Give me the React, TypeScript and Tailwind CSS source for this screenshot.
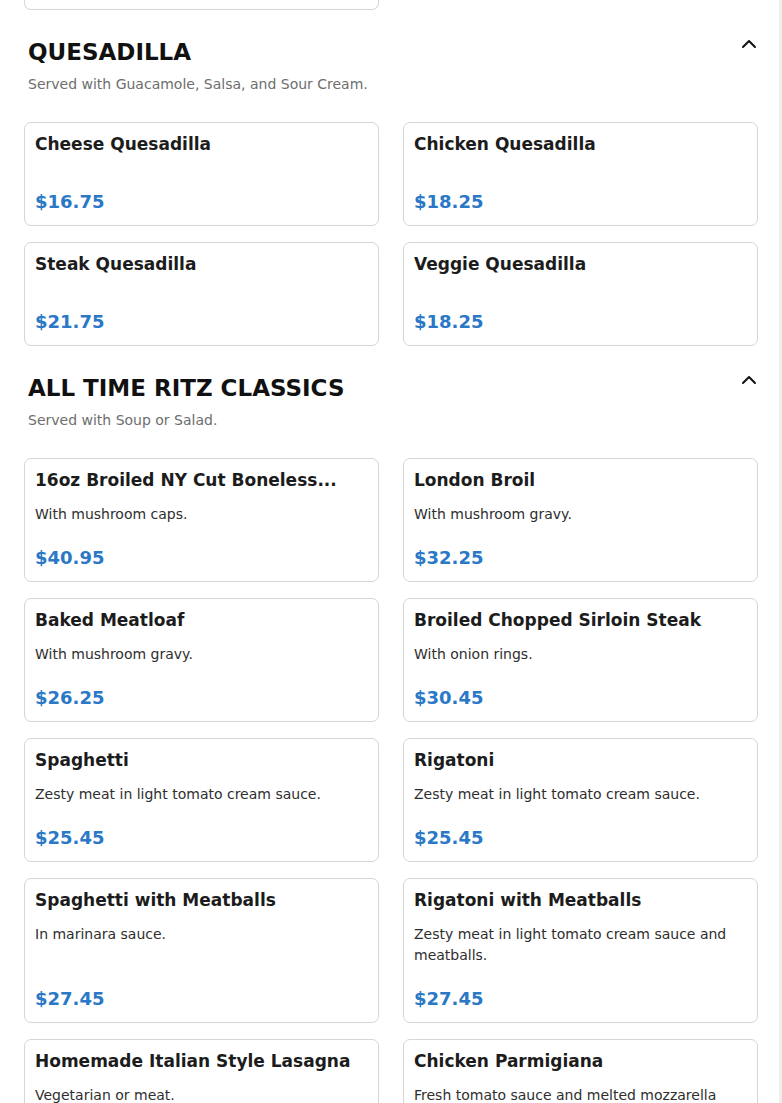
import { ChevronUp } from 'lucide-react';

interface MenuItem {
  name: string;
  description?: string;
  price: string;
}

interface MenuSection {
  title: string;
  note: string;
  items: MenuItem[];
}

const sections: MenuSection[] = [
  {
    title: 'QUESADILLA',
    note: 'Served with Guacamole, Salsa, and Sour Cream.',
    items: [
      { name: 'Cheese Quesadilla', price: '$16.75' },
      { name: 'Chicken Quesadilla', price: '$18.25' },
      { name: 'Steak Quesadilla', price: '$21.75' },
      { name: 'Veggie Quesadilla', price: '$18.25' },
    ],
  },
  {
    title: 'ALL TIME RITZ CLASSICS',
    note: 'Served with Soup or Salad.',
    items: [
      { name: '16oz Broiled NY Cut Boneless...', description: 'With mushroom caps.', price: '$40.95' },
      { name: 'London Broil', description: 'With mushroom gravy.', price: '$32.25' },
      { name: 'Baked Meatloaf', description: 'With mushroom gravy.', price: '$26.25' },
      { name: 'Broiled Chopped Sirloin Steak', description: 'With onion rings.', price: '$30.45' },
      { name: 'Spaghetti', description: 'Zesty meat in light tomato cream sauce.', price: '$25.45' },
      { name: 'Rigatoni', description: 'Zesty meat in light tomato cream sauce.', price: '$25.45' },
      { name: 'Spaghetti with Meatballs', description: 'In marinara sauce.', price: '$27.45' },
      {
        name: 'Rigatoni with Meatballs',
        description: 'Zesty meat in light tomato cream sauce and meatballs.',
        price: '$27.45',
      },
      { name: 'Homemade Italian Style Lasagna', description: 'Vegetarian or meat.', price: '$24.45' },
      {
        name: 'Chicken Parmigiana',
        description: 'Fresh tomato sauce and melted mozzarella cheese.',
        price: '$27.45',
      },
    ],
  },
];

function ItemCard({ item }: { item: MenuItem }) {
  return (
    <div className="flex flex-col rounded-[7px] border border-[#d6d6d6] bg-white px-[10px] pt-[11px] pb-[11px]">
      <div className="truncate text-[17px] font-bold leading-[20px] text-[#1c1c1c]">{item.name}</div>
      {item.description && (
        <p className="mt-[14px] text-[14px] leading-[21px] text-[#2e2e2e]">{item.description}</p>
      )}
      <div
        className={`mt-auto text-[18px] font-bold leading-[24px] text-[#2a78c6] ${
          item.description ? 'pt-[21px]' : 'pt-[36px]'
        }`}
      >
        {item.price}
      </div>
    </div>
  );
}

function Section({ section }: { section: MenuSection }) {
  return (
    <section className="pt-[26px]">
      <div className="flex items-start justify-between pl-1">
        <h2 className="text-[23px] font-bold leading-[32px] text-[#111111]">{section.title}</h2>
        <ChevronUp size={24} strokeWidth={2} className="-mt-[4px] -mr-[3px] text-[#111111]" />
      </div>
      <p className="mt-[6px] pl-1 text-[14px] leading-[20px] text-[#6e6e6e]">{section.note}</p>
      <div className="mt-[28px] grid grid-cols-2 gap-x-6 gap-y-4">
        {section.items.map(item => (
          <ItemCard key={item.name} item={item} />
        ))}
      </div>
    </section>
  );
}

export default function App() {
  return (
    <div className="flex min-h-screen bg-white" style={{ fontFamily: '"DejaVu Sans", Verdana, sans-serif' }}>
      <main className="w-[779px] pl-6 pr-[21px]">
        {/* tail of the previous section's last card */}
        <div className="grid grid-cols-2 gap-x-6">
          <div className="h-[10px] rounded-b-[7px] border border-t-0 border-[#d6d6d6]" />
        </div>
        {sections.map(section => (
          <Section key={section.title} section={section} />
        ))}
      </main>
      <div className="w-[3px] shrink-0 bg-[#eeeeee]" />
    </div>
  );
}
